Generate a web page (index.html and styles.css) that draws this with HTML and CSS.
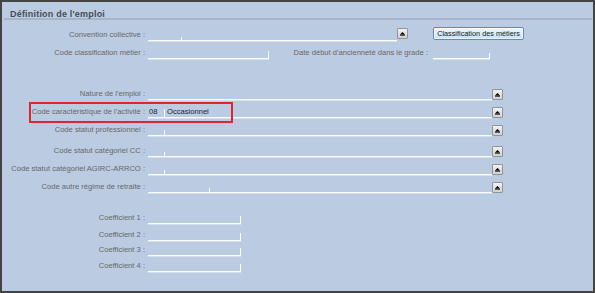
FILE: index.html
```html
<!DOCTYPE html>
<html lang="fr">
<head>
<meta charset="utf-8">
<title>Définition de l'emploi</title>
<link rel="stylesheet" href="styles.css">
</head>
<body>
<div class="frame">
  <div class="title">Définition de l'emploi</div>
  <div class="rows">
    <div class="row mt9">
      <div class="label">Convention collective :</div>
      <div class="field w-conv"><span class="code c33"></span><span class="tick t3"></span></div>
      <div class="drop up2"><svg width="9" height="9" viewBox="0 0 9 9"><path d="M2 5.6 L4.5 3 L7 5.6 Z" fill="#000"/><rect x="2" y="5.6" width="5" height="1" fill="#000"/></svg></div>
      <button class="action">Classification des métiers</button>
    </div>
    <div class="row mt6">
      <div class="label">Code classification métier :</div>
      <div class="field w-classif end"><span class="tick t7"></span></div>
      <div class="label label-date">Date début d'ancienneté dans le grade :</div>
      <div class="field w-date end gap5"><span class="tick t5"></span></div>
    </div>
    <div class="row mt29">
      <div class="label">Nature de l'emploi :</div>
      <div class="field w-combo"></div>
      <div class="drop"><svg width="9" height="9" viewBox="0 0 9 9"><path d="M2 5.6 L4.5 3 L7 5.6 Z" fill="#000"/><rect x="2" y="5.6" width="5" height="1" fill="#000"/></svg></div>
    </div>
    <div class="row mt6 marked">
      <div class="label">Code caractéristique de l'activité :</div>
      <div class="field w-combo"><span class="code c16 val">08</span><span class="tick t8"></span><span class="desc val">Occasionnel</span></div>
      <div class="drop"><svg width="9" height="9" viewBox="0 0 9 9"><path d="M2 5.6 L4.5 3 L7 5.6 Z" fill="#000"/><rect x="2" y="5.6" width="5" height="1" fill="#000"/></svg></div>
      <div class="highlight"></div>
    </div>
    <div class="row mt6">
      <div class="label">Code statut professionnel :</div>
      <div class="field w-combo"><span class="code c16"></span><span class="tick t5"></span></div>
      <div class="drop"><svg width="9" height="9" viewBox="0 0 9 9"><path d="M2 5.6 L4.5 3 L7 5.6 Z" fill="#000"/><rect x="2" y="5.6" width="5" height="1" fill="#000"/></svg></div>
    </div>
    <div class="row mt9">
      <div class="label">Code statut catégoriel CC :</div>
      <div class="field w-combo"><span class="code c16"></span><span class="tick t4"></span></div>
      <div class="drop"><svg width="9" height="9" viewBox="0 0 9 9"><path d="M2 5.6 L4.5 3 L7 5.6 Z" fill="#000"/><rect x="2" y="5.6" width="5" height="1" fill="#000"/></svg></div>
    </div>
    <div class="row mt6">
      <div class="label">Code statut catégoriel AGIRC-ARRCO :</div>
      <div class="field w-combo"><span class="code c16"></span><span class="tick t4"></span></div>
      <div class="drop"><svg width="9" height="9" viewBox="0 0 9 9"><path d="M2 5.6 L4.5 3 L7 5.6 Z" fill="#000"/><rect x="2" y="5.6" width="5" height="1" fill="#000"/></svg></div>
    </div>
    <div class="row mt6">
      <div class="label">Code autre régime de retraite :</div>
      <div class="field w-combo"><span class="code c61"></span><span class="tick t4"></span></div>
      <div class="drop"><svg width="9" height="9" viewBox="0 0 9 9"><path d="M2 5.6 L4.5 3 L7 5.6 Z" fill="#000"/><rect x="2" y="5.6" width="5" height="1" fill="#000"/></svg></div>
    </div>
    <div class="row mt19">
      <div class="label">Coefficient 1 :</div>
      <div class="field w-coef end"><span class="tick t7"></span></div>
    </div>
    <div class="row mt5">
      <div class="label">Coefficient 2 :</div>
      <div class="field w-coef end"><span class="tick t7"></span></div>
    </div>
    <div class="row mt3">
      <div class="label">Coefficient 3 :</div>
      <div class="field w-coef end"><span class="tick t7"></span></div>
    </div>
    <div class="row mt4">
      <div class="label">Coefficient 4 :</div>
      <div class="field w-coef end"><span class="tick t7"></span></div>
    </div>
  </div>
</div>
</body>
</html>
```

FILE: styles.css
```css
html, body {
  margin: 0;
  padding: 0;
  background: #bacbe2;
}

.frame {
  width: 595px;
  height: 293px;
  box-sizing: border-box;
  border: 2px solid #444;
  background: #bacbe2;
  font-family: "Liberation Sans", Arial, sans-serif;
  font-size: 7.6px;
  color: #686868;
  overflow: hidden;
}

.title {
  height: 18px;
  box-sizing: border-box;
  margin: 0 1px 0 2px;
  padding: 7px 0 0 6px;
  line-height: 10px;
  font-size: 9px;
  font-weight: bold;
  letter-spacing: 0.2px;
  color: #484c52;
  border-bottom: 2px solid #a8b5c6;
}

.rows {
  display: flex;
  flex-direction: column;
}

.row {
  display: flex;
  align-items: flex-end;
  height: 12px;
}

.mt3 { margin-top: 3px; }
.mt4 { margin-top: 4px; }
.mt5 { margin-top: 5px; }
.mt6 { margin-top: 6px; }
.mt9 { margin-top: 9px; }
.mt19 { margin-top: 19px; }
.mt29 { margin-top: 29px; }

.label {
  flex: none;
  width: 143px;
  align-self: center;
  line-height: 12px;
  text-align: right;
  white-space: nowrap;
}

.label-date {
  width: 159px;
}

.field {
  flex: none;
  display: flex;
  align-items: flex-end;
  height: 12px;
  box-sizing: border-box;
  margin-left: 3px;
  border-bottom: 1px solid #fbfcfe;
  box-shadow: 0 1px 0 #d6e0ed;
}

.field.end { justify-content: flex-end; }
.field.gap5 { margin-left: 5px; }

.w-conv { width: 249px; }
.w-classif { width: 121px; }
.w-date { width: 57px; }
.w-combo { width: 344px; }
.w-coef { width: 93px; }

.code { flex: none; display: block; }
.c16 { width: 16px; }
.c33 { width: 33px; }
.c61 { width: 61px; }

.tick {
  flex: none;
  display: block;
  width: 1px;
  background: #fbfcfe;
}
.t3 { height: 3px; }
.t4 { height: 4px; }
.t5 { height: 5px; }
.t7 { height: 7px; }
.t8 { height: 8px; }

.val {
  align-self: center;
  line-height: 11px;
  color: #1a1d3a;
  white-space: nowrap;
}
.code.val { padding-left: 1px; box-sizing: border-box; }
.desc { padding-left: 2px; }

.drop {
  flex: none;
  width: 11px;
  height: 11px;
  box-sizing: border-box;
  border: 1px solid #8f949a;
  border-radius: 1px;
  background: linear-gradient(#f2f2f2, #d0d0d0);
  display: flex;
}
.drop svg { display: block; }
.drop.up2 { margin-bottom: 2px; }

.action {
  flex: none;
  margin: 0 0 1px 25px;
  width: 91px;
  height: 13px;
  padding: 0;
  box-sizing: border-box;
  border: 1px solid #5b8cba;
  border-radius: 2px;
  background: linear-gradient(#eef7fd, #c6e1f6);
  box-shadow: inset 0 0 0 1px rgba(255,255,255,0.6);
  font-family: "Liberation Sans", Arial, sans-serif;
  font-size: 7.3px;
  line-height: 11px;
  color: #101828;
  white-space: nowrap;
}

.marked { position: relative; }

.highlight {
  position: absolute;
  left: 27px;
  top: -4px;
  width: 204px;
  height: 21px;
  box-sizing: border-box;
  border: 2px solid #e0262c;
}
```
